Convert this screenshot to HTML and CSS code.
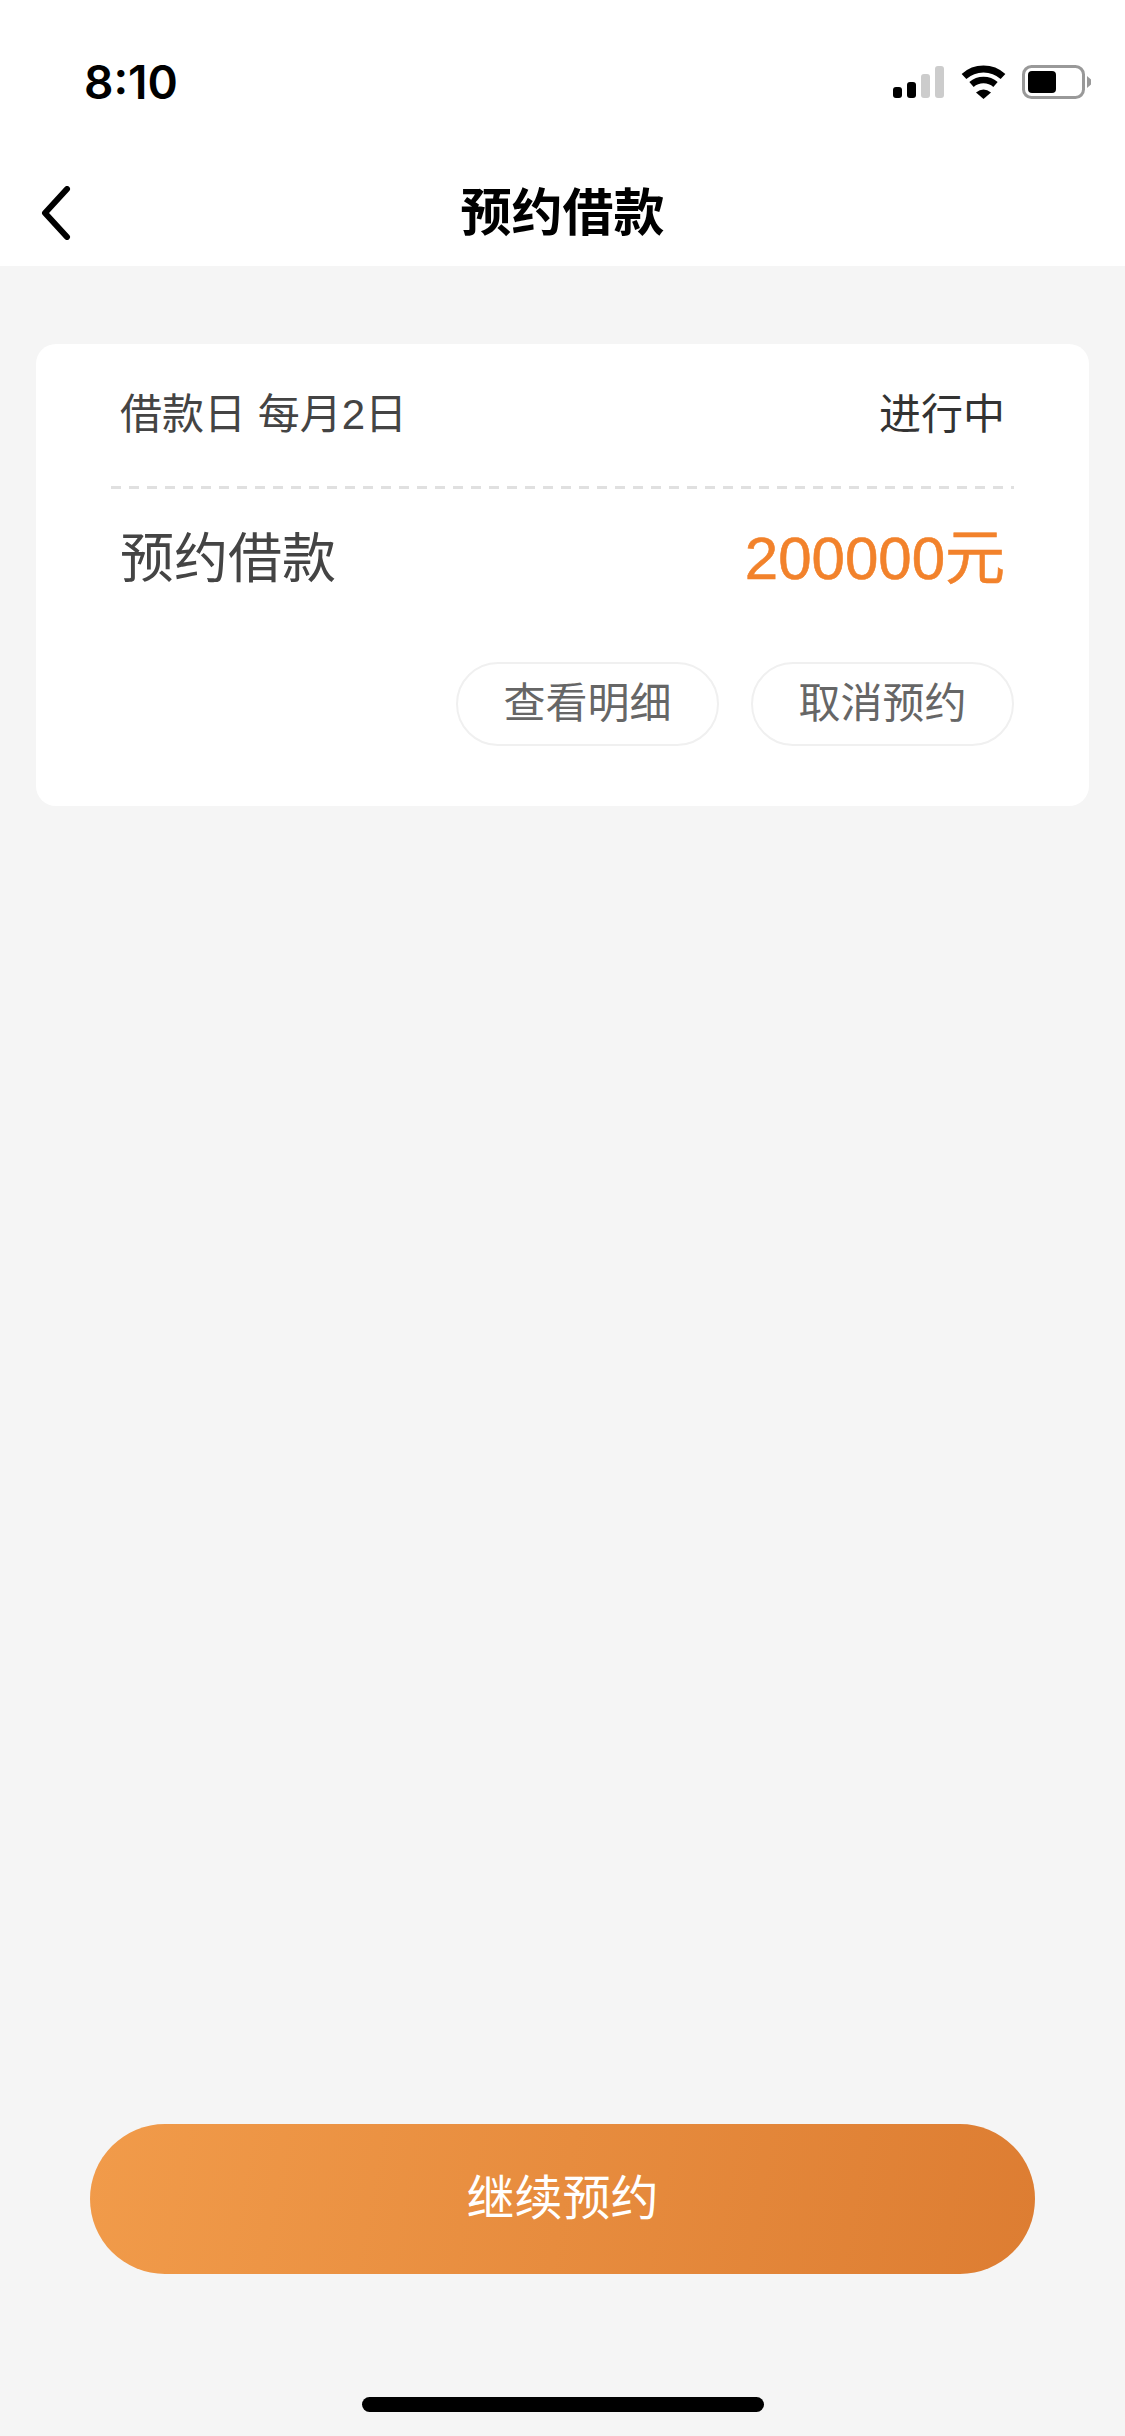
FILE: index.html
```html
<!DOCTYPE html>
<html lang="zh-CN">
<head>
  <meta charset="UTF-8" />
  <meta name="viewport" content="width=device-width, initial-scale=1" />
  <title>预约借款</title>
  <link rel="stylesheet" href="styles.css">
</head>
<body>
  <div class="page">
    <header class="top">
      <div class="status">
        <span class="time">8:10</span>
        <div class="status-icons">
          <svg class="signal" width="51" height="32" viewBox="0 0 51 32">
            <rect x="0" y="21" width="9" height="11" rx="3" fill="#000" />
            <rect x="14" y="16" width="9" height="16" rx="3" fill="#000" />
            <rect x="28" y="8" width="9" height="24" rx="3" fill="#ccc" />
            <rect x="42" y="0" width="9" height="32" rx="3" fill="#ccc" />
          </svg>
          <svg class="wifi" width="45" height="34" viewBox="0 0 45 34">
            <path d="M3 11.5 A29 29 0 0 1 42 11.5" fill="none" stroke="#000" stroke-width="7" />
            <path d="M10.5 19.5 A18 18 0 0 1 34.5 19.5" fill="none" stroke="#000" stroke-width="6.5" />
            <path d="M15 27.5 Q22.5 21.5 30 27.5 L22.5 34 Z" fill="#000" />
          </svg>
          <svg class="battery" width="70" height="35" viewBox="0 0 70 35">
            <rect x="1.5" y="1.5" width="60" height="31" rx="8" fill="none" stroke="#999" stroke-width="3" />
            <rect x="6" y="6" width="28" height="22" rx="4" fill="#000" />
            <path d="M65 11 L69 14.5 L69 19.5 L65 23 Z" fill="#999" />
          </svg>
        </div>
      </div>
      <nav class="nav">
        <svg class="back" width="30" height="54" viewBox="0 0 30 54">
          <path d="M26 3 L4 27 L26 51" fill="none" stroke="#000" stroke-width="6" stroke-linecap="round" stroke-linejoin="round" />
        </svg>
        <h1 class="nav-title">预约借款</h1>
        <span></span>
      </nav>
    </header>

    <section class="card">
      <div class="card-head">
        <span class="due">借款日 每月2日</span>
        <span class="state">进行中</span>
      </div>
      <div class="dashed"></div>
      <div class="card-main">
        <span class="label">预约借款</span>
        <span class="amount">200000元</span>
      </div>
      <div class="card-actions">
        <button class="pill">查看明细</button>
        <button class="pill">取消预约</button>
      </div>
    </section>

    <footer class="bottom">
      <button class="continue-btn">继续预约</button>
      <div class="home-bar"></div>
    </footer>
  </div>
</body>
</html>
```

FILE: styles.css
```css
* {
  box-sizing: border-box;
}
body {
  margin: 0;
  background: #f5f5f5;
  font-family: "Liberation Sans", "Noto Sans CJK SC", sans-serif;
}
.page {
  min-height: 2436px;
  display: flex;
  flex-direction: column;
}
.top {
  background: #fff;
  height: 266px;
}
.status {
  height: 160px;
  padding: 65px 33px 0 84px;
  display: flex;
  justify-content: space-between;
  align-items: flex-start;
}
.time {
  font-family: Inter, sans-serif;
  font-size: 46px;
  line-height: 34px;
  font-weight: 600;
  color: #000;
}
.status-icons {
  display: flex;
  align-items: flex-start;
  gap: 16px;
}
.signal {
  margin-top: 1px;
  margin-right: 1px;
}
.nav {
  height: 106px;
  display: grid;
  grid-template-columns: 1fr auto 1fr;
  align-items: center;
  padding: 0 41px;
}
.nav-title {
  margin: 0 0 8px;
  font-family: "Noto Sans CJK SC", sans-serif;
  font-size: 51px;
  font-weight: 700;
  line-height: 60px;
  color: #000;
}
.card {
  margin: 78px 36px 0;
  background: #fff;
  border-radius: 20px;
  padding: 45px 75px 60px;
}
.card-head,
.card-main {
  display: flex;
  justify-content: space-between;
  align-items: flex-start;
  padding: 0 9px;
}
.card-head {
  height: 46px;
  font-size: 42px;
  line-height: 52px;
}
.due {
  color: #444;
}
.state {
  color: #333;
}
.dashed {
  height: 3px;
  margin-top: 51px;
  background: repeating-linear-gradient(90deg, #e0e0e0 0, #e0e0e0 10px, transparent 10px, transparent 18px);
}
.card-main {
  height: 70px;
  margin-top: 34px;
}
.label {
  font-size: 54px;
  line-height: 73px;
  color: #444;
}
.amount {
  font-size: 60px;
  line-height: 72px;
  color: #f2822b;
  -webkit-text-stroke: 0.6px #f2822b;
}
.card-actions {
  display: flex;
  justify-content: flex-end;
  gap: 32px;
  margin-top: 69px;
}
.pill {
  width: 263px;
  height: 84px;
  border: 2px solid #f0f0f0;
  border-radius: 42px;
  background: #fff;
  font-family: inherit;
  font-size: 42px;
  color: #666;
  padding: 0 0 9px;
}
.bottom {
  margin-top: auto;
  padding-bottom: 24px;
  display: flex;
  flex-direction: column;
  align-items: center;
}
.continue-btn {
  width: 945px;
  height: 150px;
  border: none;
  border-radius: 75px;
  background: linear-gradient(100deg, #f19b4a, #dd7d32);
  font-family: inherit;
  font-size: 48px;
  color: #fff;
  padding: 0 0 11px;
}
.home-bar {
  width: 402px;
  height: 15px;
  margin-top: 123px;
  background: #000;
  border-radius: 8px;
}
```
